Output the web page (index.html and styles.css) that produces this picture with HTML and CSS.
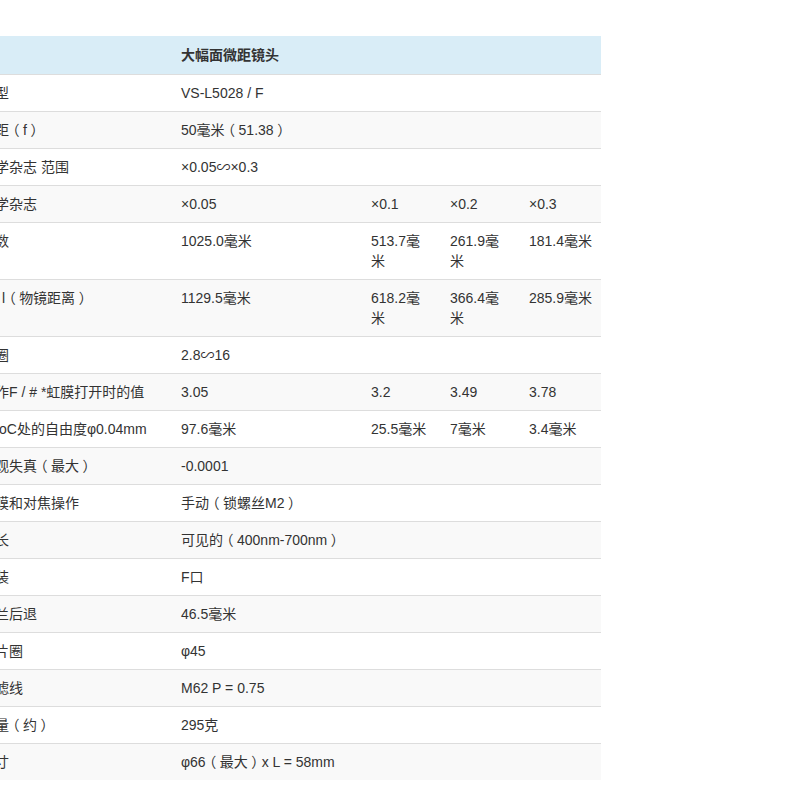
FILE: index.html
```html
<!DOCTYPE html>
<html lang="zh-CN">
<head>
<meta charset="utf-8">
<title>VS-L5028 / F</title>
<link rel="stylesheet" href="styles.css">
</head>
<body>
<div class="wrap">
<table class="spec">
  <colgroup>
    <col class="c-label">
    <col class="c-main">
    <col class="c-n1">
    <col class="c-n2">
    <col class="c-n3">
  </colgroup>
  <tbody>
    <tr class="head"><td class="lbl"></td><td>大幅面微距镜头</td><td></td><td></td><td></td></tr>
    <tr><td class="lbl">型</td><td>VS-L5028 / F</td><td></td><td></td><td></td></tr>
    <tr><td class="lbl">距<span class="br">（</span>f<span class="br">）</span></td><td>50毫米<span class="br">（</span>51.38<span class="br">）</span></td><td></td><td></td><td></td></tr>
    <tr><td class="lbl">学杂志 范围</td><td>×0.05∽×0.3</td><td></td><td></td><td></td></tr>
    <tr><td class="lbl">学杂志</td><td>×0.05</td><td>×0.1</td><td>×0.2</td><td>×0.3</td></tr>
    <tr><td class="lbl">数</td><td>1025.0毫米</td><td>513.7毫米</td><td>261.9毫米</td><td>181.4毫米</td></tr>
    <tr><td class="lbl lbl-l">l<span class="br">（</span>物镜距离<span class="br">）</span></td><td>1129.5毫米</td><td>618.2毫米</td><td>366.4毫米</td><td>285.9毫米</td></tr>
    <tr><td class="lbl">圈</td><td>2.8∽16</td><td></td><td></td><td></td></tr>
    <tr><td class="lbl">作F / # *虹膜打开时的值</td><td>3.05</td><td>3.2</td><td>3.49</td><td>3.78</td></tr>
    <tr><td class="lbl lbl-o">oC处的自由度φ0.04mm</td><td>97.6毫米</td><td>25.5毫米</td><td>7毫米</td><td>3.4毫米</td></tr>
    <tr><td class="lbl">观失真<span class="br">（</span>最大<span class="br">）</span></td><td>-0.0001</td><td></td><td></td><td></td></tr>
    <tr><td class="lbl">膜和对焦操作</td><td>手动<span class="br">（</span>锁螺丝M2<span class="br">）</span></td><td></td><td></td><td></td></tr>
    <tr><td class="lbl">长</td><td>可见的<span class="br">（</span>400nm-700nm<span class="br">）</span></td><td></td><td></td><td></td></tr>
    <tr><td class="lbl">装</td><td>F口</td><td></td><td></td><td></td></tr>
    <tr><td class="lbl">兰后退</td><td>46.5毫米</td><td></td><td></td><td></td></tr>
    <tr><td class="lbl">片圈</td><td>φ45</td><td></td><td></td><td></td></tr>
    <tr><td class="lbl">滤线</td><td>M62 P = 0.75</td><td></td><td></td><td></td></tr>
    <tr><td class="lbl">量<span class="br">（</span>约<span class="br">）</span></td><td>295克</td><td></td><td></td><td></td></tr>
    <tr><td class="lbl">寸</td><td>φ66<span class="br">（</span>最大<span class="br">）</span>x L = 58mm</td><td></td><td></td><td></td></tr>
  </tbody>
</table>
</div>
</body>
</html>
```

FILE: styles.css
```css
html, body {
  margin: 0;
  padding: 0;
  background: #fff;
}
body {
  font-family: "Liberation Sans", Arial, "Noto Sans CJK SC", sans-serif;
  font-size: 14px;
  line-height: 20px;
  color: #333;
  overflow: hidden;
}
.wrap {
  padding-top: 36px;
}
.spec {
  table-layout: fixed;
  width: 601px;
  border-collapse: collapse;
  border-spacing: 0;
}
.c-label { width: 173px; }
.c-main { width: 190px; }
.c-n1 { width: 79px; }
.c-n2 { width: 79px; }
.c-n3 { width: 80px; }

.spec td {
  padding: 8px;
  vertical-align: top;
  border-top: 1px solid #ddd;
  text-align: left;
  white-space: normal;
}
.spec tr:nth-of-type(odd) {
  background: #f9f9f9;
}
.spec tr.head {
  background: #d9edf7;
}
.spec tr.head td {
  font-weight: bold;
  border-top: 1px solid #d9edf7;
  padding-bottom: 9px;
}
.spec td.lbl {
  padding-left: 0;
  text-indent: -5px;
  white-space: nowrap;
  overflow: visible;
}
.spec td.lbl-l {
  text-indent: 2px;
}
.spec td.lbl-o {
  text-indent: -1px;
}
/* full-width brackets: trimmed to half width, then centred in a full em */
.br {
  font-feature-settings: "halt";
  padding: 0 3.5px;
}
```
